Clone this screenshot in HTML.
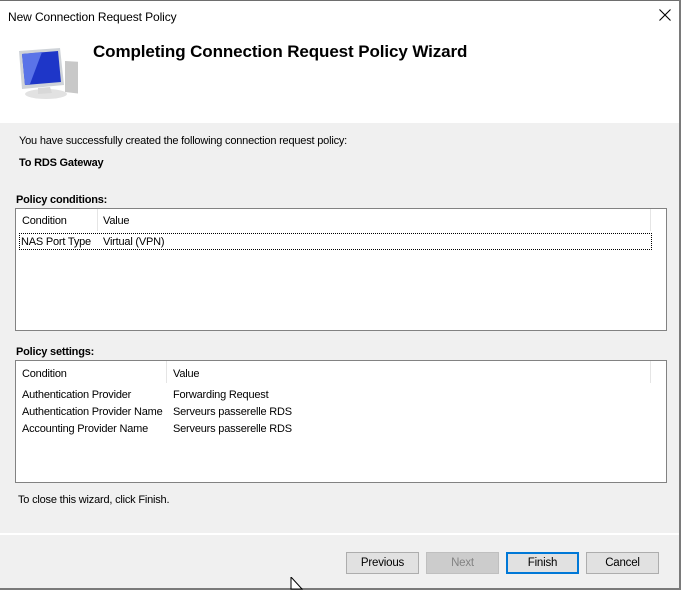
<!DOCTYPE html>
<html><head><meta charset="utf-8"><style>
*{margin:0;padding:0;box-sizing:border-box}
body{width:681px;height:590px;overflow:hidden;background:#f0f0f0;font-family:"Liberation Sans",sans-serif;font-size:11px;letter-spacing:-0.2px;color:#000;position:relative}
.a{position:absolute;white-space:nowrap}
.hdr{position:absolute;left:0;top:0;width:681px;height:123px;background:#fff}
.box{position:absolute;left:15px;width:652px;height:123px;background:#fff;border:1px solid #828282}
.btn{position:absolute;top:552px;width:73px;height:22px;background:#e1e1e1;border:1px solid #adadad;text-align:center;line-height:20px;font-size:11.5px}
</style></head><body>
<div class="hdr"></div>
<div class="a" style="left:0;top:0;width:681px;height:1px;background:#6e6e6e"></div>
<div class="a" style="left:679px;top:0;width:2px;height:590px;background:#7a7a7a"></div>
<div class="a" style="left:0;top:588px;width:681px;height:2px;background:#7a7a7a"></div>
<div class="a" style="left:8px;top:10px;font-size:12px;letter-spacing:-0.1px">New Connection Request Policy</div>
<svg class="a" style="left:658px;top:8px" width="14" height="14"><path d="M1.5 1.5L12.5 12.5M12.5 1.5L1.5 12.5" stroke="#000" stroke-width="1.1"/></svg>
<svg class="a" style="left:12px;top:44px" width="66" height="56">
<ellipse cx="34" cy="50" rx="21" ry="5" fill="#e2e2e2"/>
<path d="M53 17 L70 18 L70 50 L53 48Z" fill="#c8c8c8"/>
<rect x="70" y="18" width="4" height="32" fill="#9c9c9c"/>
<path d="M7 7 L48 4 L52 41 L10 45Z" fill="#cfd3d8"/>
<path d="M10 10 L46 7 L49 38 L13 41Z" fill="#1e36c8"/>
<path d="M10 10 L30 8 L18 40 L13 41Z" fill="#5a74e8"/>
<path d="M26 44 L38 43 L40 49 L26 50Z" fill="#d8d8d8"/>
</svg>
<div class="a" style="left:93px;top:42px;font-size:17px;font-weight:bold;letter-spacing:-0.1px">Completing Connection Request Policy Wizard</div>
<div class="a" style="left:19px;top:135px">You have successfully created the following connection request policy:</div>
<div class="a" style="left:19px;top:157px;font-weight:bold">To RDS Gateway</div>
<div class="a" style="left:16px;top:194px;font-weight:bold">Policy conditions:</div>
<div class="box" style="top:208px">
<div class="a" style="left:81px;top:0;width:1px;height:22px;background:#e5e5e5"></div>
<div class="a" style="left:634px;top:0;width:1px;height:22px;background:#e5e5e5"></div>
<div class="a" style="left:6px;top:6px">Condition</div>
<div class="a" style="left:87px;top:6px">Value</div>
<div class="a" style="left:3px;top:24px;width:633px;height:17px;border:1px dotted #000"></div>
<div class="a" style="left:5px;top:27px">NAS Port Type</div>
<div class="a" style="left:87px;top:27px">Virtual (VPN)</div>
</div>
<div class="a" style="left:16px;top:346px;font-weight:bold">Policy settings:</div>
<div class="box" style="top:360px">
<div class="a" style="left:150px;top:0;width:1px;height:22px;background:#e5e5e5"></div>
<div class="a" style="left:634px;top:0;width:1px;height:22px;background:#e5e5e5"></div>
<div class="a" style="left:6px;top:7px">Condition</div>
<div class="a" style="left:157px;top:7px">Value</div>
<div class="a" style="left:6px;top:28px">Authentication Provider</div>
<div class="a" style="left:157px;top:28px">Forwarding Request</div>
<div class="a" style="left:6px;top:45px">Authentication Provider Name</div>
<div class="a" style="left:157px;top:45px">Serveurs passerelle RDS</div>
<div class="a" style="left:6px;top:62px">Accounting Provider Name</div>
<div class="a" style="left:157px;top:62px">Serveurs passerelle RDS</div>
</div>
<div class="a" style="left:18px;top:494px">To close this wizard, click Finish.</div>
<div class="a" style="left:0;top:533px;width:679px;height:2px;background:#fff"></div>
<div class="btn" style="left:346px">Previous</div>
<div class="btn" style="left:426px;background:#ccc;border-color:#bfbfbf;color:#838383">Next</div>
<div class="btn" style="left:506px;border:2px solid #0078d7;line-height:18px">Finish</div>
<div class="btn" style="left:586px">Cancel</div>
<svg class="a" style="left:290px;top:577px" width="14" height="13"><path d="M1 0 L1 12 L12 12Z" fill="#fff" stroke="#000"/></svg>
</body></html>
